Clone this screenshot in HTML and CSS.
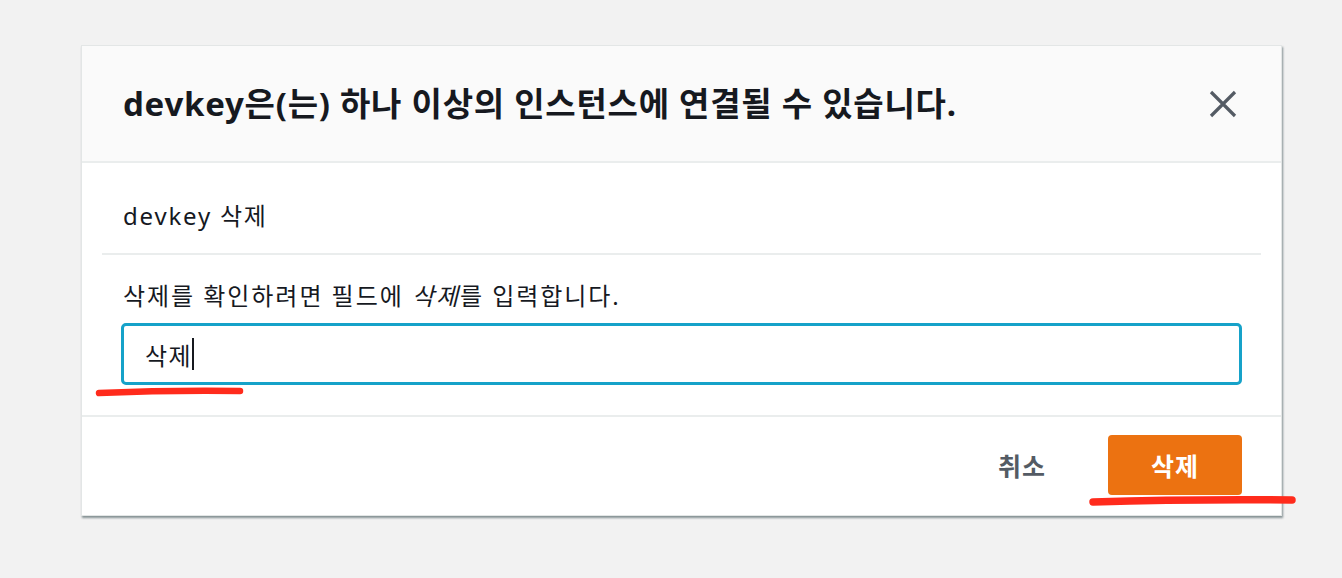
FILE: index.html
```html
<!DOCTYPE html>
<html lang="ko">
<head>
<meta charset="utf-8">
<title>키 페어 삭제</title>
<link rel="stylesheet" href="styles.css">
</head>
<body>
<div class="dialog">
  <div class="dialog-header">
    <h2 class="dialog-title">devkey은(는) 하나 이상의 인스턴스에 연결될 수 있습니다.</h2>
    <button class="close-btn" aria-label="닫기">
      <svg width="28" height="28" viewBox="0 0 28 28"><path d="M2 2 L26 26 M26 2 L2 26" stroke="#545b64" stroke-width="3.2" fill="none"/></svg>
    </button>
  </div>
  <div class="dialog-body">
    <div class="key-row">devkey 삭제</div>
    <div class="confirm-row">
      <label class="confirm-label">삭제를 확인하려면 필드에 <em>삭제</em>를 입력합니다.</label>
      <div class="input-box"><span class="input-text">삭제</span><span class="caret"></span></div>
    </div>
  </div>
  <div class="dialog-footer">
    <button class="btn-link">취소</button>
    <button class="btn-primary">삭제</button>
  </div>
</div>
<svg class="marks" width="1342" height="578" viewBox="0 0 1342 578">
  <path d="M99 393 Q170 390 240 391" stroke="#ff2b1c" stroke-width="6.5" stroke-linecap="round" fill="none"/>
  <path d="M1093 502 Q1190 499 1292 500" stroke="#ff2b1c" stroke-width="7.5" stroke-linecap="round" fill="none"/>
</svg>
</body>
</html>
```
FILE: styles.css
```css
html, body {
  margin: 0;
  padding: 0;
}
body {
  background: #f2f2f2;
  font-family: "Noto Sans", "Noto Sans CJK KR", sans-serif;
  color: #16191f;
  width: 1342px;
  height: 578px;
  overflow: hidden;
  position: relative;
}
.dialog {
  margin: 45px 0 0 81px;
  width: 1201px;
  box-sizing: border-box;
  background: #fff;
  border: 1px solid #e3e6e6;
  box-shadow: 1px 2px 2px rgba(0, 28, 36, 0.45);
}
.dialog-header {
  height: 115px;
  background: #fafafa;
  border-bottom: 2px solid #eaeded;
  display: flex;
  align-items: center;
  justify-content: space-between;
  padding: 0 44px 0 41px;
}
.dialog-title {
  margin: 0;
  font-size: 33px;
  font-weight: 700;
  line-height: 40px;
  letter-spacing: 0.75px;
  color: #16191f;
}
.close-btn {
  border: 0;
  background: none;
  padding: 0;
  width: 28px;
  height: 28px;
  display: flex;
  cursor: pointer;
}
.dialog-body {
  padding: 0 20px;
  border-bottom: 2px solid #eaeded;
}
.key-row {
  padding: 37px 21px 21px;
  font-size: 24px;
  line-height: 32px;
  letter-spacing: 1.8px;
  border-bottom: 2px solid #eaeded;
}
.confirm-row {
  padding: 26px 19px 30px;
}
.confirm-label {
  display: block;
  font-size: 24px;
  line-height: 30px;
  letter-spacing: 1.95px;
  margin: 0 0 12px 2px;
}
.confirm-label em {
  font-style: italic;
}
.input-box {
  height: 62px;
  box-sizing: border-box;
  border: 3px solid #16a2c9;
  border-radius: 5px;
  display: flex;
  align-items: center;
  padding: 0 21px;
  font-size: 24px;
  letter-spacing: 1.5px;
}
.caret {
  display: inline-block;
  width: 1.5px;
  height: 32px;
  background: #16191f;
  margin-left: 0;
}
.dialog-footer {
  display: flex;
  justify-content: flex-end;
  align-items: center;
  padding: 18px 39px 20px;
  gap: 62px;
}
.btn-link {
  border: 0;
  background: none;
  font-family: inherit;
  font-size: 25px;
  font-weight: 700;
  letter-spacing: 1px;
  color: #545b64;
  padding: 0;
}
.btn-primary {
  width: 134px;
  height: 60px;
  border: 0;
  border-radius: 4px;
  background: #ec7211;
  color: #fff;
  font-family: inherit;
  font-size: 25px;
  font-weight: 700;
  letter-spacing: 1px;
}
.marks {
  position: absolute;
  left: 0;
  top: 0;
  pointer-events: none;
}
```
